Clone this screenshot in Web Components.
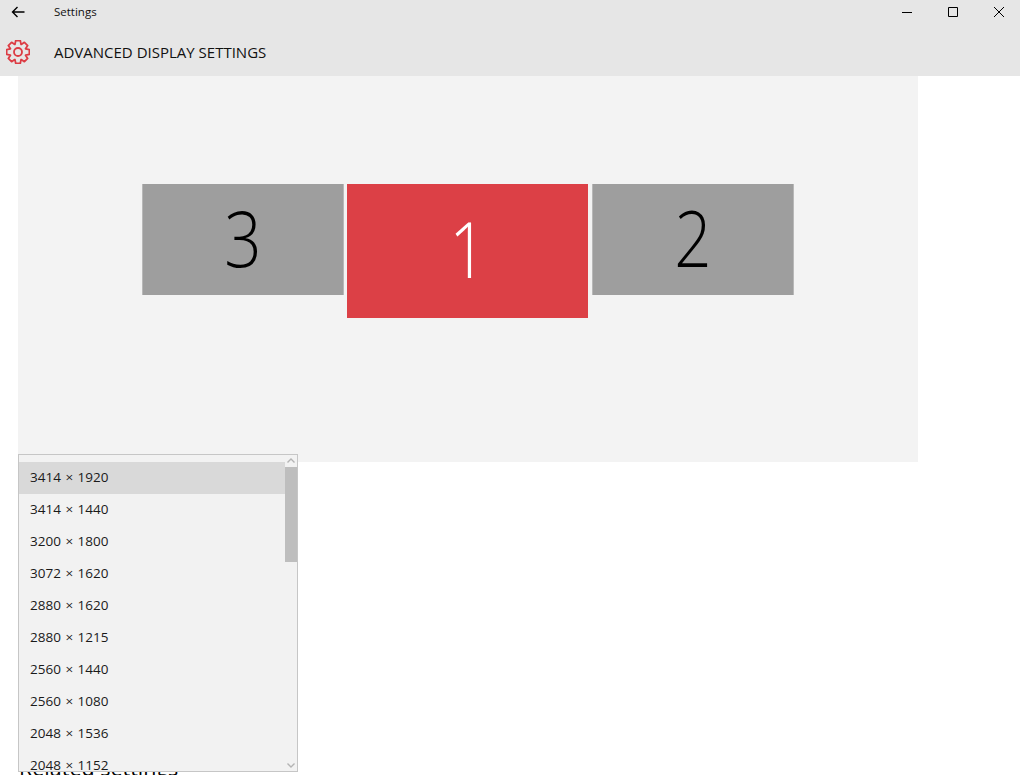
<!DOCTYPE html>
<html>
<head>
<meta charset="utf-8">
<title>Settings</title>
<style>
  html, body { margin: 0; height: 775px; overflow: hidden; background: #fff; }
  body { font-family: "Open Sans", "Liberation Sans", sans-serif; color: #000; position: relative; }
</style>
</head>
<body>
<settings-app></settings-app>
<script>
class TitleBar extends HTMLElement {
  connectedCallback() {
    this.attachShadow({ mode: 'open' }).innerHTML = `
      <style>
        :host { display: flex; align-items: center; height: 38px; background: #e6e6e6; overflow: hidden; padding-bottom: 14px; box-sizing: border-box; }
        .back { width: 54px; height: 24px; display: flex; align-items: center; padding-left: 11px; box-sizing: border-box; }
        .name { flex: 1; font-size: 11.5px; line-height: 24px; color: #111; }
        .ctl { width: 46px; height: 24px; display: flex; align-items: center; justify-content: center; }
        .ctl:last-child { margin-right: -2px; }
        svg { display: block; fill: none; stroke: #000; stroke-width: 1; }
        .back svg { stroke-width: 1.4; }
      </style>
      <div class="back">
        <svg width="14" height="12" viewBox="0 0 14 12"><path d="M13.5 6H1.500M6.500 1 1.500 6l5 5"/></svg>
      </div>
      <div class="name"><slot></slot></div>
      <div class="ctl"><svg width="10" height="10" viewBox="0 0 10 10"><path d="M0 5.500h10"/></svg></div>
      <div class="ctl"><svg width="10" height="10" viewBox="0 0 10 10"><path d="M.5.5h9v9h-9z"/></svg></div>
      <div class="ctl"><svg width="10" height="10" viewBox="0 0 10 10"><path d="M0 0l10 10M10 0 0 10"/></svg></div>`;
  }
}

class PageHeader extends HTMLElement {
  connectedCallback() {
    const pts = [];
    const teeth = 8;
    for (let i = 0; i < teeth; i++) {
      const a = i * 2 * Math.PI / teeth - Math.PI / 2;
      [[-0.38, 8.2], [-0.2, 11.6], [0.2, 11.6], [0.38, 8.2]].forEach(([o, r]) => {
        pts.push((12 + r * Math.cos(a + o)).toFixed(2) + ' ' + (12 + r * Math.sin(a + o)).toFixed(2));
      });
    }
    this.attachShadow({ mode: 'open' }).innerHTML = `
      <style>
        :host { display: flex; align-items: center; height: 38px; background: #e6e6e6; padding-bottom: 10px; box-sizing: border-box; }
        .icon { width: 54px; padding-left: 6px; box-sizing: border-box; }
        svg { display: block; fill: none; stroke: #dc3c44; stroke-width: 1.8; stroke-linejoin: round; }
        .title { font-size: 15px; line-height: 24px; color: #111; }
      </style>
      <div class="icon"><svg width="24" height="24" viewBox="0 0 24 24"><path d="M${pts.join('L')}Z"/><circle cx="12" cy="12" r="4"/></svg></div>
      <div class="title"><slot></slot></div>`;
  }
}

class DisplayMonitor extends HTMLElement {
  connectedCallback() {
    this.attachShadow({ mode: 'open' }).innerHTML = `
      <style>
        :host { display: flex; align-items: center; justify-content: center; width: 202px; height: 111px; padding-bottom: 5px; background: #9e9e9e; color: #000; font-family: "Open Sans", sans-serif; font-weight: 300; font-size: 77px; border-left: 1px solid #b8b8b8; border-right: 1px solid #b8b8b8; box-sizing: border-box; }
        :host([active]) { width: 241px; height: 134px; background: #dc4046; color: #fff; border: 0; margin: 0 4px 0 3px; }
        .num { display: inline-block; transform: scaleX(.85); }
      </style>
      <span class="num"><slot></slot></span>`;
  }
}

class DisplayPanel extends HTMLElement {
  connectedCallback() {
    this.attachShadow({ mode: 'open' }).innerHTML = `
      <style>
        :host { display: flex; align-items: flex-start; width: 900px; height: 386px; margin-left: 18px; padding: 108px 0 0 124px; box-sizing: border-box; background: #f3f3f3; }
      </style>
      <slot></slot>`;
  }
}

class ListOption extends HTMLElement {
  connectedCallback() {
    this.attachShadow({ mode: 'open' }).innerHTML = `
      <style>
        :host { display: block; height: 32px; line-height: 31px; padding-left: 11px; font-size: 13.5px; word-spacing: 1px; color: #1a1a1a; white-space: nowrap; }
        :host([selected]) { background: #d9d9d9; }
      </style>
      <slot></slot>`;
  }
}

class ResolutionList extends HTMLElement {
  connectedCallback() {
    this.attachShadow({ mode: 'open' }).innerHTML = `
      <style>
        :host { position: absolute; left: 18px; top: 454px; width: 280px; height: 318px; box-sizing: border-box; border: 1px solid #c6c6c6; background: #f2f2f2; display: flex; overflow: hidden; }
        .items { flex: 1; padding-top: 7px; min-width: 0; }
        .bar { width: 12px; display: flex; flex-direction: column; position: relative; }
        .thumb { position: absolute; left: 0; right: 0; top: 12px; height: 95px; background: #bebebe; }
        svg { position: absolute; left: 2px; fill: none; stroke: #b4b4b4; stroke-width: 1.4; display: block; }
        .up { top: 3px; }
        .down { bottom: 3px; }
      </style>
      <div class="items"><slot></slot></div>
      <div class="bar">
        <svg class="up" width="8" height="5" viewBox="0 0 8 5"><path d="M.5 4.500 4 1l3.500 3.500"/></svg>
        <div class="thumb"></div>
        <svg class="down" width="8" height="5" viewBox="0 0 8 5"><path d="M.5.5 4 4 7.500.5"/></svg>
      </div>`;
  }
}

class SettingsApp extends HTMLElement {
  connectedCallback() {
    const sizes = ['3414 × 1440', '3200 × 1800', '3072 × 1620', '2880 × 1620', '2880 × 1215',
      '2560 × 1440', '2560 × 1080', '2048 × 1536', '2048 × 1152'];
    this.attachShadow({ mode: 'open' }).innerHTML = `
      <style>
        :host { display: block; }
        .related { margin: 292px 0 0 19px; font-size: 21.5px; line-height: 28px; color: #000; }
      </style>
      <title-bar>Settings</title-bar>
      <page-header>ADVANCED DISPLAY SETTINGS</page-header>
      <display-panel>
        <display-monitor>3</display-monitor>
        <display-monitor active>1</display-monitor>
        <display-monitor>2</display-monitor>
      </display-panel>
      <div class="related">Related settings</div>
      <resolution-list>
        <list-option selected>3414 × 1920</list-option>
        ${sizes.map(s => `<list-option>${s}</list-option>`).join('')}
      </resolution-list>`;
  }
}

customElements.define('title-bar', TitleBar);
customElements.define('page-header', PageHeader);
customElements.define('display-monitor', DisplayMonitor);
customElements.define('display-panel', DisplayPanel);
customElements.define('list-option', ListOption);
customElements.define('resolution-list', ResolutionList);
customElements.define('settings-app', SettingsApp);
</script>
</body>
</html>
